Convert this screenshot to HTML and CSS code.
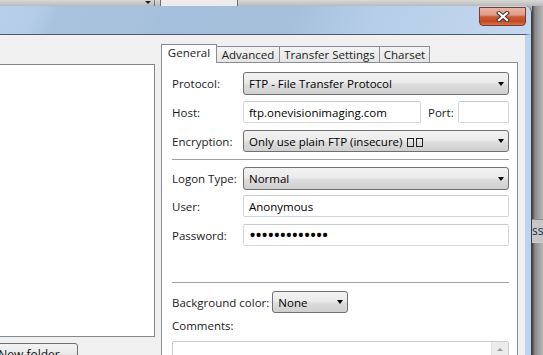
FILE: index.html
```html
<!DOCTYPE html>
<html lang="en">
<head>
  <meta charset="UTF-8">
  <title>Site Manager</title>
  <link rel="stylesheet" href="styles.css">
</head>
<body>
  <div class="desktop">
    <div class="behind-top">
      <span class="behind-arrow"></span>
      <span class="behind-sep"></span>
      <span class="behind-field"><span>Remote site:</span></span>
    </div>

    <div class="stage">
      <div class="dialog">
        <div class="titlebar">
          <div class="close-btn">
            <svg width="14" height="11" viewBox="0 0 14 11">
              <path d="M3 2 L11 9 M11 2 L3 9" stroke="#3d3431" stroke-width="4.2" stroke-linecap="square"/>
              <path d="M3 2 L11 9 M11 2 L3 9" stroke="#ffffff" stroke-width="2.2" stroke-linecap="square"/>
            </svg>
          </div>
        </div>

        <div class="client">
          <div class="sidebar">
            <div class="site-list"></div>
            <button class="btn new-folder" type="button">New folder</button>
          </div>

          <div class="site-tabs">
            <ul class="tab-strip">
              <li class="tab tab-general active">General</li>
              <li class="tab tab-advanced">Advanced</li>
              <li class="tab tab-transfer">Transfer Settings</li>
              <li class="tab tab-charset">Charset</li>
            </ul>

            <div class="tab-panel">
              <div class="row row-protocol">
                <label>Protocol:</label>
                <div class="combo"><span>FTP - File Transfer Protocol</span><i class="arrow"></i></div>
              </div>

              <div class="row row-host">
                <label>Host:</label>
                <input class="field host" type="text" value="ftp.onevisionimaging.com">
                <span class="port-label">Port:</span>
                <input class="field port" type="text" value="">
              </div>

              <div class="row row-encryption">
                <label>Encryption:</label>
                <div class="combo"><span>Only use plain FTP (insecure) <b class="tofu"></b><b class="tofu"></b></span><i class="arrow"></i></div>
              </div>

              <div class="sep sep-first"></div>

              <div class="row row-logon">
                <label>Logon Type:</label>
                <div class="combo"><span>Normal</span><i class="arrow"></i></div>
              </div>

              <div class="row row-user">
                <label>User:</label>
                <input class="field" type="text" value="Anonymous">
              </div>

              <div class="row row-password">
                <label>Password:</label>
                <input class="field password" type="password" value="xxxxxxxxxxxxx">
              </div>

              <div class="sep sep-second"></div>

              <div class="row row-bgcolor">
                <label>Background color:</label>
                <div class="combo combo-small"><span>None</span><i class="arrow"></i></div>
              </div>

              <div class="comments-label">Comments:</div>
              <div class="comments-box">
                <div class="scroll"><i class="scroll-up"></i></div>
              </div>
            </div>
          </div>
        </div>
      </div>

      <div class="behind-right">
        <div class="behind-cell">ss</div>
      </div>
    </div>
  </div>
</body>
</html>
```

FILE: styles.css
```css
* {
  box-sizing: border-box;
}

body {
  margin: 0;
  width: 543px;
  height: 355px;
  overflow: hidden;
  font-family: "Open Sans", "Noto Sans", sans-serif;
  font-size: 11.5px;
  color: #1b1b1b;
  background: #b4b4b4;
}

.desktop {
  width: 543px;
  height: 355px;
  display: flex;
  flex-direction: column;
  overflow: hidden;
}

/* window behind the dialog */
.behind-top {
  height: 6px;
  flex: none;
  display: flex;
  align-items: flex-start;
  background: linear-gradient(#d8d8d8, #bababa);
  overflow: hidden;
}

.behind-arrow {
  margin-left: 145px;
  margin-top: 1px;
  width: 0;
  border-left: 3px solid transparent;
  border-right: 3px solid transparent;
  border-top: 3px solid #222;
}

.behind-sep {
  margin-left: 3px;
  width: 1px;
  height: 6px;
  background: #767676;
}

.behind-field {
  margin-left: 5px;
  width: 78px;
  height: 6px;
  overflow: hidden;
  background: #ececec;
  border-left: 1px solid #6f6f6f;
  border-right: 1px solid #6f6f6f;
  color: #8c8c8c;
  padding-left: 6px;
}

.behind-field span {
  display: block;
  margin-top: -11px;
  line-height: 14px;
  font-size: 12px;
}

.stage {
  flex: 1;
  display: flex;
}

.behind-right {
  flex: 1;
  display: flex;
  flex-direction: column;
  background: linear-gradient(to right, #3e3e3e, #8c8c8c 3px, #b6b6b6);
}

.behind-cell {
  margin-top: 213px;
  height: 24px;
  border-top: 1px solid #8a8a8a;
  border-bottom: 1px solid #d0d0d0;
  background: #c6c6c6;
  color: #1d2b48;
  line-height: 22px;
  font-size: 12px;
  overflow: hidden;
  white-space: nowrap;
}

/* dialog */
.dialog {
  width: 532px;
  flex: none;
  display: flex;
  flex-direction: column;
  border-right: 1px solid #36404c;
  border-top-right-radius: 7px;
  overflow: hidden;
}

.titlebar {
  height: 28px;
  flex: none;
  display: flex;
  justify-content: flex-end;
  align-items: flex-start;
  background: linear-gradient(110deg, #b8d0ea 0%, #b4cce6 7%, #a9c3df 11%, #a8c2de 27%, #a4bfdb 31%, #a6c0dc 55%, #b6cee8 70%, #c3d8ef 100%);
}

.close-btn {
  width: 47px;
  height: 19px;
  margin-right: 5px;
  margin-top: 1px;
  display: flex;
  align-items: center;
  justify-content: center;
  border: 1px solid #7b3b27;
  border-radius: 0 0 4px 4px;
  background: linear-gradient(#eab3a5 0%, #e19c88 40%, #cc5c36 52%, #c24a22 78%, #d7714f 100%);
}

.client {
  flex: 1;
  display: flex;
  align-items: flex-start;
  background: #f0f0f0;
  border-top: 1px solid #4e5a68;
  border-right: 6px solid #bbd3ec;
}

.sidebar {
  width: 155px;
  flex: none;
  margin-top: 29px;
}

.site-list {
  margin-left: -1px;
  width: 156px;
  height: 273px;
  background: #fff;
  border: 1px solid #828790;
}

.btn {
  font: inherit;
  font-size: 12px;
  color: #111;
  height: 23px;
  border: 1px solid #707070;
  border-radius: 3px;
  background: linear-gradient(#f2f2f2, #ebebeb 45%, #dddddd 55%, #cfcfcf);
  padding: 0;
}

.new-folder {
  display: block;
  margin-top: 6px;
  margin-left: -20px;
  width: 98px;
}

.site-tabs {
  width: 357px;
  flex: none;
  align-self: stretch;
  margin-left: 6px;
  margin-top: 9px;
  display: flex;
  flex-direction: column;
}

.tab-strip {
  list-style: none;
  margin: 0 0 -1px;
  padding: 0;
  height: 19px;
  display: flex;
  align-items: flex-end;
  position: relative;
  z-index: 1;
}

.tab {
  height: 16px;
  margin-bottom: 1px;
  margin-left: -1px;
  border: 1px solid #898c95;
  border-bottom: none;
  background: linear-gradient(#f4f4f4, #e4e4e4);
  text-align: center;
  line-height: 15px;
  white-space: nowrap;
}

.tab:first-child {
  margin-left: 0;
}

.tab.active {
  height: 19px;
  margin-bottom: 0;
  background: #fff;
  line-height: 16px;
}

.tab-general { width: 56px; }
.tab-advanced { width: 64px; }
.tab-transfer { width: 101px; }
.tab-charset { width: 51px; }

.tab-panel {
  flex: 1;
  background: #fff;
  border: 1px solid #898c95;
  padding: 9px 8px 0 10px;
  display: flex;
  flex-direction: column;
}

.row {
  display: flex;
  align-items: center;
  flex: none;
}

.row label {
  width: 71px;
  flex: none;
}

.combo {
  flex: 1;
  height: 23px;
  display: flex;
  align-items: center;
  justify-content: space-between;
  padding: 0 4px 0 5px;
  border: 1px solid #707070;
  border-radius: 3px;
  background: linear-gradient(#f2f2f2, #ebebeb 45%, #dddddd 55%, #cfcfcf);
  color: #000;
  white-space: nowrap;
}

.arrow {
  width: 0;
  border-left: 3.5px solid transparent;
  border-right: 3.5px solid transparent;
  border-top: 4px solid #000;
}

.tofu {
  display: inline-block;
  width: 7px;
  height: 9px;
  margin-left: 2px;
  border: 1px solid #222;
  vertical-align: -1px;
}

.field {
  height: 22px;
  flex: 1;
  min-width: 0;
  font: inherit;
  color: #000;
  padding: 0 5px;
  border: 1px solid #d3d8de;
  border-top-color: #c6cbd1;
  border-radius: 2px;
  background: #fff;
  outline: none;
}

.field.host {
  flex: none;
  width: 178px;
}

.port-label {
  margin-left: 7px;
}

.field.port {
  flex: none;
  width: 51px;
  margin-left: auto;
}

.field.password {
  font-size: 19px;
  letter-spacing: -1.1px;
  padding-left: 5px;
}

.row-protocol { margin-top: 0; }
.row-host { margin-top: 6px; }
.row-encryption { margin-top: 7px; }
.row-logon { margin-top: 7px; }
.row-user { margin-top: 5px; }
.row-password { margin-top: 7px; }
.row-bgcolor { margin-top: 8px; }

.row-encryption .combo,
.row-user .field,
.row-password .field {
  height: 22px;
}

.sep {
  height: 1px;
  flex: none;
  background: #a0a0a0;
}

.sep-first { margin-top: 7px; }
.sep-second { margin-top: 36px; }

.row-bgcolor label {
  width: auto;
  margin-right: 3px;
}

.combo-small {
  flex: none;
  width: 76px;
  height: 22px;
}

.comments-label {
  margin-top: 5px;
  line-height: 16px;
}

.comments-box {
  margin-top: 7px;
  height: 40px;
  flex: none;
  display: flex;
  justify-content: flex-end;
  border: 1px solid #c9cdd3;
  border-radius: 2px;
}

.scroll {
  width: 17px;
  background: #ececec;
  border-left: 1px solid #e0e0e0;
  display: flex;
  justify-content: center;
  padding-top: 6px;
}

.scroll-up {
  width: 0;
  height: 0;
  border-left: 3px solid transparent;
  border-right: 3px solid transparent;
  border-bottom: 3px solid #9a9a9a;
}
```
